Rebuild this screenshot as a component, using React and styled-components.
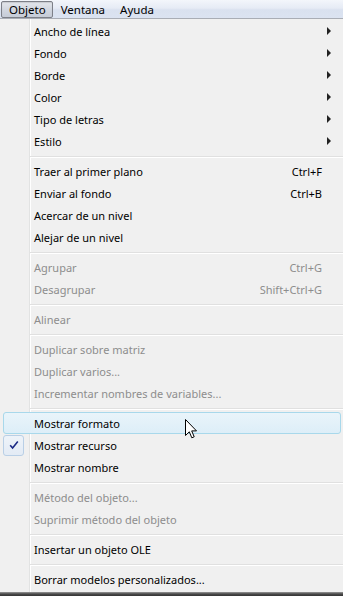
import React from "react";
import styled, { createGlobalStyle } from "styled-components";

const GlobalStyle = createGlobalStyle`
  html, body {
    margin: 0;
    padding: 0;
    background: #f0f0f0;
  }
  body {
    font-family: "Noto Sans", "Open Sans", sans-serif;
    font-size: 11px;
    color: #000;
    width: 343px;
    height: 596px;
    overflow: hidden;
  }
`;

const sections = [
  [
    { label: "Ancho de línea", sub: true },
    { label: "Fondo", sub: true },
    { label: "Borde", sub: true },
    { label: "Color", sub: true },
    { label: "Tipo de letras", sub: true },
    { label: "Estilo", sub: true },
  ],
  [
    { label: "Traer al primer plano", key: "Ctrl+F" },
    { label: "Enviar al fondo", key: "Ctrl+B" },
    { label: "Acercar de un nivel" },
    { label: "Alejar de un nivel" },
  ],
  [
    { label: "Agrupar", key: "Ctrl+G", disabled: true },
    { label: "Desagrupar", key: "Shift+Ctrl+G", disabled: true },
  ],
  [{ label: "Alinear", disabled: true }],
  [
    { label: "Duplicar sobre matriz", disabled: true },
    { label: "Duplicar varios...", disabled: true },
    { label: "Incrementar nombres de variables...", disabled: true },
  ],
  [
    { label: "Mostrar formato", hover: true },
    { label: "Mostrar recurso", checked: true },
    { label: "Mostrar nombre" },
  ],
  [
    { label: "Método del objeto...", disabled: true },
    { label: "Suprimir método del objeto", disabled: true },
  ],
  [{ label: "Insertar un objeto OLE" }],
  [{ label: "Borrar modelos personalizados..." }],
];

const App = () => {
  return (
    <Screen>
      <GlobalStyle />
      <MenuBar>
        <TopItem $active>Objeto</TopItem>
        <TopItem>Ventana</TopItem>
        <TopItem>Ayuda</TopItem>
      </MenuBar>
      <Dropdown>
        {sections.map((items, i) => (
          <React.Fragment key={i}>
            {i > 0 && <Separator />}
            {items.map((it) => (
              <Item key={it.label} $hover={it.hover} $disabled={it.disabled}>
                <Gutter>
                  {it.checked && (
                    <CheckBox>
                      <svg width="10" height="10" viewBox="0 0 10 10">
                        <path
                          d="M1.2 5.2 L3.6 8 L8.8 1.4"
                          fill="none"
                          stroke="#1c2a85"
                          strokeWidth="1.6"
                        />
                      </svg>
                    </CheckBox>
                  )}
                </Gutter>
                <Label>{it.label}</Label>
                <Shortcut>{it.key || ""}</Shortcut>
                <ArrowCell>{it.sub && <Arrow />}</ArrowCell>
                {it.hover && (
                  <Cursor>
                    <svg width="13" height="21" viewBox="0 0 13 21">
                      <path
                        d="M0.5 0.5 L0.5 16.5 L4.3 12.8 L6.8 18.8 L9.2 17.8 L6.7 11.9 L11.5 11.9 Z"
                        fill="#fff"
                        stroke="#000"
                        strokeWidth="1"
                        strokeLinejoin="miter"
                      />
                    </svg>
                  </Cursor>
                )}
              </Item>
            ))}
          </React.Fragment>
        ))}
      </Dropdown>
      <Shadow />
    </Screen>
  );
};

const Screen = styled.div`
  display: flex;
  flex-direction: column;
  width: 343px;
  height: 596px;
`;

const MenuBar = styled.div`
  display: flex;
  align-items: center;
  height: 18px;
  padding-left: 1px;
  background: linear-gradient(to bottom, #f3f6fb 0%, #e6ebf5 45%, #d9e1ef 55%, #dbe3f1 100%);
  border-bottom: 1px solid #a9adb5;
`;

const TopItem = styled.div`
  box-sizing: border-box;
  height: 17px;
  line-height: 15px;
  padding: 0 6px 0 7px;
  font-size: 11.5px;
  border: 1px solid ${(p) => (p.$active ? "#7d8088" : "transparent")};
  border-radius: 2px;
  background: ${(p) =>
    p.$active
      ? "linear-gradient(to bottom, #e4e7ec 0%, #d2d7e0 50%, #c6ccd7 100%)"
      : "transparent"};
  box-shadow: ${(p) => (p.$active ? "inset 0 1px 1px rgba(0,0,0,0.12)" : "none")};
`;

const Dropdown = styled.div`
  display: flex;
  flex-direction: column;
  padding: 1px 2px 1px 3px;
  background:
    linear-gradient(
      to right,
      transparent 29px,
      #e2e3e3 29px,
      #e2e3e3 30px,
      #ffffff 30px,
      #ffffff 31px,
      transparent 31px
    ),
    #f0f0f0;
  flex: 1;
`;

const Item = styled.div`
  position: relative;
  box-sizing: border-box;
  display: grid;
  grid-template-columns: 28px 1fr auto 18px;
  align-items: center;
  height: 22px;
  color: ${(p) => (p.$disabled ? "#8d8d8d" : "#000")};
  border: 1px solid ${(p) => (p.$hover ? "#a8d8eb" : "transparent")};
  border-radius: 3px;
  background: ${(p) =>
    p.$hover
      ? "linear-gradient(to bottom, #e9f4fa 0%, #ddeef8 100%)"
      : "transparent"};
`;

const Gutter = styled.div`
  display: flex;
  align-items: center;
  height: 20px;
  margin-left: -1px;
`;

const CheckBox = styled.div`
  box-sizing: border-box;
  display: flex;
  align-items: center;
  justify-content: center;
  width: 21px;
  height: 21px;
  border: 1px solid #b9cfe6;
  border-radius: 3px;
  background: linear-gradient(to bottom, #eef3f9, #e3ebf5);
`;

const Label = styled.span`
  padding-left: 2px;
  white-space: nowrap;
`;

const Shortcut = styled.span`
  white-space: nowrap;
`;

const ArrowCell = styled.div`
  display: flex;
  align-items: center;
  padding-left: 5px;
`;

const Arrow = styled.span`
  width: 0;
  height: 0;
  border-top: 4px solid transparent;
  border-bottom: 4px solid transparent;
  border-left: 4px solid #222;
`;

const Cursor = styled.div`
  position: absolute;
  left: 181px;
  top: 6px;
  width: 13px;
  height: 21px;
  z-index: 2;
`;

const Separator = styled.div`
  height: 8px;
  margin-left: 27px;
  margin-right: -2px;
  display: flex;
  flex-direction: column;
  justify-content: center;
  &::before {
    content: "";
    display: block;
    height: 1px;
    background: #e0e0e0;
    border-bottom: 1px solid #ffffff;
    margin-top: 2px;
  }
`;

const Shadow = styled.div`
  height: 4px;
  background: linear-gradient(to bottom, #9a9a9a 0%, #4a4a4a 50%, #353535 100%);
  flex-shrink: 0;
`;

export default App;
